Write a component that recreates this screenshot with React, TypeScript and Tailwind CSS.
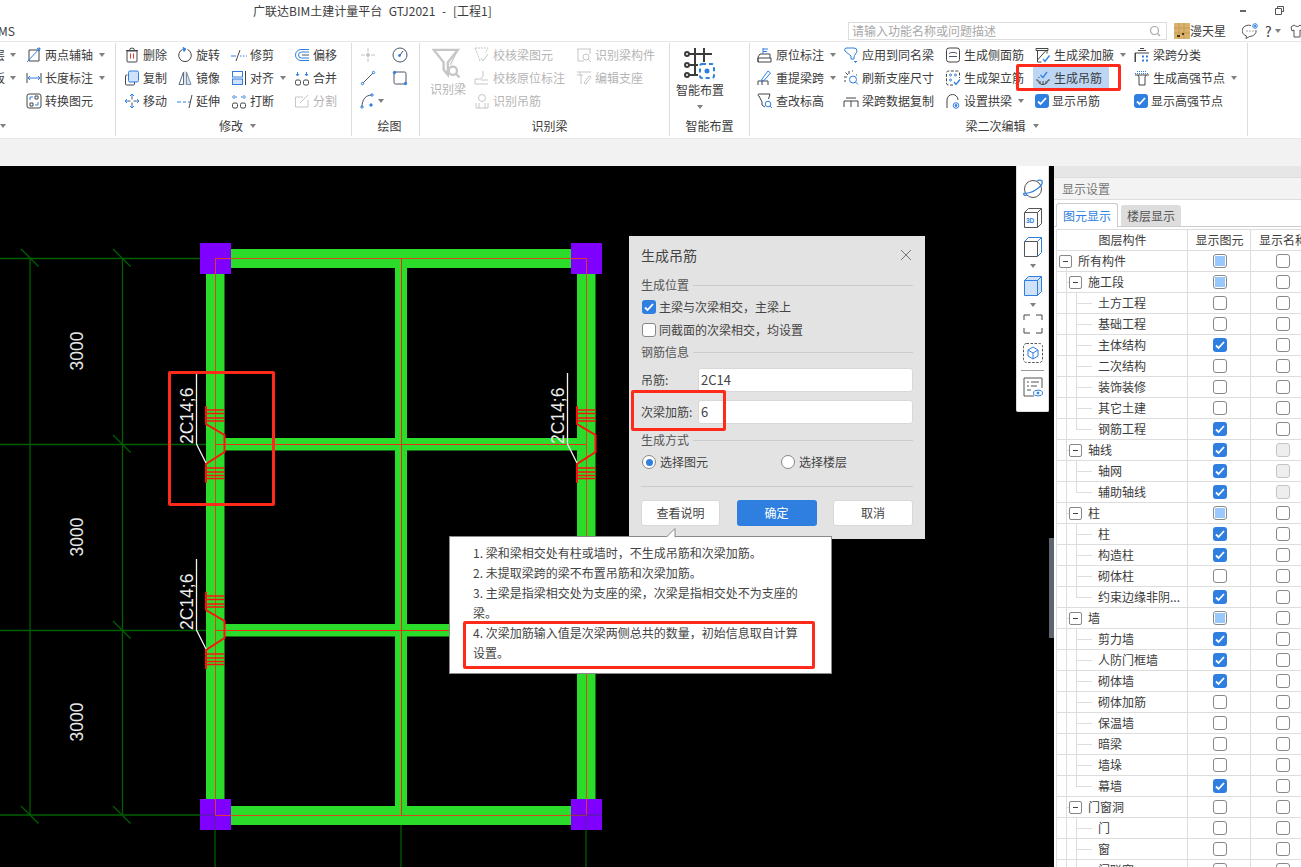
import type { ReactNode } from "react";

const B = "#2f7fe0";
const G = "#c6c6c6";
const S = "#4a5568";

const icons: Record<string, ReactNode> = {
  twoPoint: (<><path d="M3 14V3h10v11z" /><path d="M1 15L14 1" stroke={B} /><path d="M14 1l-3 .5M14 1l-.5 3" stroke={B} /></>),
  length: (<><path d="M1 3v10M15 3v10" /><path d="M2 8h12M2 8l2-2M2 8l2 2M14 8l-2-2M14 8l-2 2" stroke={B} /></>),
  convert: (<><rect x="1" y="1" width="14" height="14" rx="2" /><path d="M9 3h3v3H9zM4 10h3v3H4z" /><path d="M4 7V4h3M12 9v3H9" stroke={B} /></>),
  trash: (<><path d="M3 4h10v10a1 1 0 0 1-1 1H4a1 1 0 0 1-1-1zM2 3.500h12M5.500 3.500a2.500 2.500 0 0 1 5 0" /><path d="M6.500 6.500v5M9.500 6.500v5" stroke="#e03a30" /></>),
  rotate: (<><path d="M10.500 2.500a6.300 6.300 0 1 1-5 0" /><path d="M6 .5l3 1.500-2 2.500z" fill={B} stroke={B} /></>),
  trim: (<><path d="M0 9h5" stroke={B} /><path d="M9 9h1.500M12 9h1.500M15 9h1" stroke={B} /><path d="M5 14L9 3" /></>),
  offset: (<><path d="M15 2.500H7a5.500 5.500 0 0 0 0 11h8" stroke={B} /><path d="M15 5H7.500a3 3 0 0 0 0 6H15" stroke={B} /><path d="M15 8H8" stroke={S} /></>),
  copy: (<><path d="M3.500 5H2.500a1 1 0 0 0-1 1v8a1 1 0 0 0 1 1h7a1 1 0 0 0 1-1v-2" /><rect x="4.500" y="1" width="10" height="11" rx="1.500" fill="#cfe2fa" stroke={B} /></>),
  mirror: (<><path d="M6.500 2L2 14.500h4.500z" stroke="#5b6b80" /><path d="M9.500 2L14 14.500H9.500z" fill="#cfe2fa" stroke="#7a8ea6" /><path d="M8 1v14" stroke={G} /></>),
  align: (<><rect x="1.500" y="1.500" width="10" height="5.500" stroke={B} /><rect x="1.500" y="9" width="10" height="5.500" fill="#cfe2fa" stroke={B} /><path d="M14.500 1v14" /></>),
  merge: (<><rect x="1.500" y="10" width="5" height="5" rx="1.500" /><rect x="9.500" y="10" width="5" height="5" rx="1.500" /><path d="M3.500 2v3M2 4l1.500 2L5 4M12.500 2v3M11 4l1.500 2L14 4" stroke={B} /></>),
  move: (<><path d="M8 4v2.500M8 9.500V12M4 8h2.500M9.500 8H12" stroke={S} /><path d="M6 3l2-2 2 2M6 13l2 2 2-2M3 6L1 8l2 2M13 6l2 2-2 2M8 1v3M8 12v3M1 8h3M12 8h3" stroke={B} /></>),
  extend: (<><path d="M0 9h4M6 9h3" stroke={B} /><path d="M11 9h2" stroke={B} /><path d="M12 15l3-13" /></>),
  breakIt: (<><rect x="1.500" y="10" width="5" height="5" rx="1.500" /><rect x="9.500" y="10" width="5" height="5" rx="1.500" /><path d="M6 4H3M3.500 2L1.500 4l2 2M10 4h3M12.500 2l2 2-2 2" stroke={B} /></>),
  split: (<g stroke={G}><path d="M9 4H1.500v10H14V7" /><path d="M6 10l8-8" /></g>),
  point: (<g stroke={G}><path d="M8 1v4M8 11v4M1 8h4M11 8h4" /><circle cx="8" cy="8" r="1.500" fill={G} /></g>),
  circle: (<g stroke={S}><circle cx="8" cy="8" r="7" /><path d="M8 8l3-4" /><circle cx="7.500" cy="8.500" r="1" fill={B} stroke={B} /></g>),
  line: (<><path d="M3 13L13 3" stroke={S} /><circle cx="2.500" cy="13.500" r="1.200" stroke={B} /><circle cx="13.500" cy="2.500" r="1.200" stroke={B} /></>),
  rect: (<><rect x="2" y="2" width="12" height="12" rx="1.500" stroke={S} /><circle cx="13.500" cy="13.500" r="1.200" fill={B} stroke={B} /><circle cx="2.500" cy="2.500" r="1.200" fill={B} stroke={B} /></>),
  arc: (<><path d="M2 14C2 6 6 2 12 2" stroke={S} /><circle cx="2" cy="14" r="1.200" stroke={B} /><circle cx="12" cy="2" r="1.200" stroke={B} /><circle cx="11" cy="12" r="1.200" fill={B} stroke={B} /></>),
  checkBeam: (<g stroke={G}><path d="M1 1h13l-3 5M1 1l3 7 2 6" strokeDasharray="2 1" /><path d="M7 11l2 3 5-7" /></g>),
  checkSpot: (<g stroke={G}><path d="M1 14V9h6l2-3V1M1 14h13" /><path d="M7 10h7" /></g>),
  findRebar: (<g stroke={G}><circle cx="8" cy="5" r="3.500" /><path d="M2 10v5h12v-5M5 10v5M11 10v5" /></g>),
  findBeam: (<g stroke={G}><path d="M1 2h14M2 2v12h6M14 2v5" /><circle cx="10" cy="10" r="3" /><path d="M12 12l3 3" /></g>),
  editSeat: (<g stroke={G}><path d="M1 2h14M4 2v3M1 5h6M5 5v9" /><path d="M8 13l5-7 2 1-5 7z" /></g>),
  mark: (<><path d="M1 15v-5l2-3h10v4" /><path d="M1 11h13v4H1z" /><path d="M6 1v6M6 2h5M6 4.500h4" stroke={B} /></>),
  apply: (<><path d="M5 1h6a3 3 0 0 1 3 3c0 2-3 4-3 6v2H8V9L2 4a2 2 0 0 1 1-3z" stroke={B} /><path d="M11 14l1.500 1.500L14 14" stroke={B} fill={B} /></>),
  side: (<><rect x="1.500" y="1" width="13" height="14" rx="2.500" /><path d="M4 6.500c2-1.500 6-1.500 8 0v0M4 9.500h8" stroke={S} /></>),
  stand: (<><path d="M8 15H3.500a2 2 0 0 1-2-2V3a2 2 0 0 1 2-2h9a2 2 0 0 1 2 2v5" strokeDasharray="3 1.500" /><circle cx="5.500" cy="5" r="1" stroke={B} /><circle cx="10.500" cy="5" r="1" stroke={B} /><circle cx="5.500" cy="10" r="1" stroke={B} /><path d="M9 12l2 2.500 4-5" stroke={B} strokeWidth="1.300" /></>),
  haunch: (<><path d="M1 1.500h12v2H1zM2.500 3.500V15h4M12 3.500v3M2.500 13L11 3.500" /><path d="M8 12l2 2.500 4.500-6" stroke={B} strokeWidth="1.300" /></>),
  classify: (<><path d="M1 15V6h14M4 3.500h8M6 1.500h4" /><path d="M1.500 15V6" /><path d="M8 8.500h2v2H8zM12 8.500h2v2h-2zM8 12.500h2v2H8zM12 12.500h2v2h-2z" fill={B} stroke="none" /></>),
  repick: (<><path d="M1 15v-4h10v4M5 11v4" /><path d="M5 9l6-8 2.500 2-6 7-3 1z" stroke={B} /></>),
  refresh: (<><path d="M6 1v3M1 7h3M2.500 2.500L5 5M1 11h2" /><circle cx="10" cy="9.500" r="3.500" stroke={B} /><path d="M12.500 12l2.500 2.500" stroke={B} /><path d="M9 1h1M13 5h1" /></>),
  dup: (<><path d="M1 14V8h14v6M8 8v6M3 5h10" /></>),
  arch: (<><path d="M2 15V7a5.500 5.500 0 0 1 11 0" /><circle cx="11" cy="12.500" r="2.800" stroke={B} /><circle cx="11" cy="12.500" r="1" fill={B} stroke={B} /></>),
  lookup: (<><path d="M2 1h11l-1.500 5M2 1a1 1 0 0 0 0 2l3 6v3l3 2" /><circle cx="11" cy="11" r="2.800" stroke={B} /><path d="M13 13l2 2" stroke={B} /></>),
  hoist: (<><path d="M1 10h2a5 4.500 0 0 0 10 0h2" /><path d="M5 11v3M8 11v4M11 11v3" /><path d="M5.500 5l2.500 2.500L12 2" stroke={B} strokeWidth="1.300" /><path d="M4 7v1" /></>),
  node: (<><path d="M1 3.500h14M3 1.500h10" stroke={B} strokeDasharray="1 1" /><path d="M1 5h14M4 5l1 2v8h6V7l1-2" /></>),
};

const Ico = ({ name, size = 16 }: { name: string; size?: number }) => (
  <svg
    width={size}
    height={size}
    viewBox="0 0 16 16"
    fill="none"
    stroke="#454545"
    strokeWidth="1"
    className="shrink-0"
  >
    {icons[name]}
  </svg>
);

const Caret = ({ className = "ml-[6px]" }: { className?: string }) => (
  <span className={`${className} inline-block h-0 w-0 border-x-[3px] border-t-[4px] border-x-transparent border-t-[#808080]`} />
);

const Tool = ({
  icon,
  label,
  caret,
  off,
}: {
  icon?: string;
  label: string;
  caret?: boolean;
  off?: boolean;
}) => (
  <div className={`flex h-[23px] items-center whitespace-nowrap ${off ? "text-[#b5b5b5]" : "text-[#3c3c3c]"}`}>
    {icon && <Ico name={icon} />}
    <span className="ml-[3px]">{label}</span>
    {caret && <Caret />}
  </div>
);

const CheckTool = ({ label }: { label: string }) => (
  <div className="flex h-[23px] items-center whitespace-nowrap text-[#3c3c3c]">
    <Box state="on" />
    <span className="ml-[3px]">{label}</span>
  </div>
);

const Box = ({ state }: { state: string }) => {
  if (state === "on")
    return (
      <span className="flex h-[14px] w-[14px] shrink-0 items-center justify-center rounded-[3px] bg-[#2f7fe0]">
        <svg width="10" height="10" viewBox="0 0 10 10" fill="none" stroke="#fff" strokeWidth="1.800">
          <path d="M1 5.500l2.500 2.500L9 2" />
        </svg>
      </span>
    );
  if (state === "part")
    return (
      <span className="flex h-[14px] w-[14px] shrink-0 items-center justify-center rounded-[3px] border border-[#888] bg-white">
        <span className="h-[10px] w-[10px] bg-[#99c8ff]" />
      </span>
    );
  if (state === "dis")
    return <span className="h-[14px] w-[14px] shrink-0 rounded-[3px] border border-[#c4c4c4] bg-[#eeeeee]" />;
  return <span className="h-[14px] w-[14px] shrink-0 rounded-[3px] border border-[#888] bg-white" />;
};

const Group = ({
  className,
  label,
  caret,
  labelClass = "justify-center",
  children,
}: {
  className: string;
  label?: string;
  caret?: boolean;
  labelClass?: string;
  children: ReactNode;
}) => (
  <div className={`${className} flex h-[93px] shrink-0 flex-col border-r border-[#dddddd]`}>
    <div className="flex h-[72px] items-start">{children}</div>
    <div className={`${labelClass} flex h-[21px] items-center text-[#3c3c3c]`}>
      {label}
      {caret && <Caret className="ml-[7px]" />}
    </div>
  </div>
);

const Ribbon = () => (
  <div className="flex h-[98px] items-start overflow-hidden border-y border-[#e8e8e8] pt-[1px]">
    <Group className="w-[116px]" caret labelClass="justify-start -ml-[7px]">
      <div className="-ml-[7px] w-[33px] shrink-0">
        <div className="flex h-[23px] items-center">层<Caret className="ml-[5px]" /></div>
        <div className="flex h-[23px] items-center">板<Caret className="ml-[5px]" /></div>
      </div>
      <div>
        <Tool icon="twoPoint" label="两点辅轴" caret />
        <Tool icon="length" label="长度标注" caret />
        <Tool icon="convert" label="转换图元" />
      </div>
    </Group>
    <Group className="w-[236px] pl-[8px]" label="修改" caret>
      <div className="w-[53px] shrink-0">
        <Tool icon="trash" label="删除" />
        <Tool icon="copy" label="复制" />
        <Tool icon="move" label="移动" />
      </div>
      <div className="w-[54px] shrink-0">
        <Tool icon="rotate" label="旋转" />
        <Tool icon="mirror" label="镜像" />
        <Tool icon="extend" label="延伸" />
      </div>
      <div className="w-[63px] shrink-0">
        <Tool icon="trim" label="修剪" />
        <Tool icon="align" label="对齐" caret />
        <Tool icon="breakIt" label="打断" />
      </div>
      <div>
        <Tool icon="offset" label="偏移" />
        <Tool icon="merge" label="合并" />
        <Tool icon="split" label="分割" off />
      </div>
    </Group>
    <Group className="w-[68px] pl-[8px]" label="绘图">
      <div className="w-[32px] shrink-0">
        <Tool icon="point" label="" />
        <Tool icon="line" label="" />
        <div className="flex h-[23px] items-center"><Ico name="arc" /><Caret className="ml-[2px]" /></div>
      </div>
      <div>
        <Tool icon="circle" label="" />
        <Tool icon="rect" label="" />
      </div>
    </Group>
    <Group className="w-[250px] pl-[10px]" label="识别梁">
      <div className="flex w-[44px] shrink-0 flex-col pt-[5px] text-[#b5b5b5]">
        <svg className="ml-[2px]" width="30" height="32" viewBox="0 0 36 38" fill="none" stroke="#c6c6c6" strokeWidth="2.800">
          <path d="M2 2h29L19 17v15l-5-6V17z" />
          <path d="M31 2l-9 18" strokeWidth="1.500" />
          <circle cx="25" cy="27" r="5" fill="#fff" />
          <path d="M29 31l4 4" />
        </svg>
        <span className="whitespace-nowrap">识别梁</span>
      </div>
      <div className="w-[102px] shrink-0">
        <Tool icon="checkBeam" label="校核梁图元" off />
        <Tool icon="checkSpot" label="校核原位标注" off />
        <Tool icon="findRebar" label="识别吊筋" off />
      </div>
      <div>
        <Tool icon="findBeam" label="识别梁构件" off />
        <Tool icon="editSeat" label="编辑支座" off />
      </div>
    </Group>
    <Group className="w-[80px]" label="智能布置">
      <div className="flex w-full flex-col items-center pt-[4px] pr-[19px] text-[#3c3c3c]">
        <svg width="32" height="34" viewBox="0 0 32 34" fill="none" stroke="#3c3c3c" strokeWidth="2">
          <path d="M11 1v26M20 1v14M4 7h24M4 18h10M4 28h10" />
          <circle cx="3" cy="7" r="2" />
          <circle cx="3" cy="18" r="2" />
          <circle cx="3" cy="28" r="2" />
          <rect x="16" y="17" width="14" height="14" rx="2" stroke="#2f7fe0" strokeDasharray="4 3" />
          <circle cx="23" cy="24" r="1.500" fill="#2f7fe0" stroke="#2f7fe0" />
        </svg>
        <span className="whitespace-nowrap">智能布置</span>
        <Caret className="mt-[6px]" />
      </div>
    </Group>
    <Group className="w-[498px] pl-[7px]" label="梁二次编辑" caret>
      <div className="w-[86px] shrink-0">
        <Tool icon="mark" label="原位标注" caret />
        <Tool icon="repick" label="重提梁跨" caret />
        <Tool icon="lookup" label="查改标高" />
      </div>
      <div className="w-[102px] shrink-0">
        <Tool icon="apply" label="应用到同名梁" />
        <Tool icon="refresh" label="刷新支座尺寸" />
        <Tool icon="dup" label="梁跨数据复制" />
      </div>
      <div className="w-[90px] shrink-0">
        <Tool icon="side" label="生成侧面筋" />
        <Tool icon="stand" label="生成架立筋" />
        <Tool icon="arch" label="设置拱梁" caret />
      </div>
      <div className="w-[99px] shrink-0">
        <Tool icon="haunch" label="生成梁加腋" caret />
        <div className="-ml-[2px] w-[76px] rounded-[2px] bg-[#bcd6f3] pl-[2px]">
          <Tool icon="hoist" label="生成吊筋" />
        </div>
        <CheckTool label="显示吊筋" />
      </div>
      <div>
        <Tool icon="classify" label="梁跨分类" />
        <Tool icon="node" label="生成高强节点" caret />
        <CheckTool label="显示高强节点" />
      </div>
    </Group>
  </div>
);

const Rebar = ({ dx, dy }: { dx: number; dy: number }) => (
  <g transform={`translate(${dx} ${dy})`}>
    <path
      d="M206 406V424L224.500 435V452L206 464V483"
      fill="none"
      stroke="#ff1010"
      strokeWidth="2"
    />
    <path
      d="M206 410H224.500M206 413.500H224.500M206 418H224.500M206 421H224.500M206 468H224.500M206 472H224.500M206 475.500H224.500M206 478.500H224.500"
      fill="none"
      stroke="#ff1010"
      strokeWidth="1.500"
    />
    <path d="M196.500 373V444L206 463" fill="none" stroke="#f2f2f2" strokeWidth="1.300" />
    <text
      x="0"
      y="0"
      transform="translate(193 444) rotate(-90)"
      fontFamily="'Liberation Sans', sans-serif"
      fontSize="17.500"
      fill="#ededed"
    >
      2C14;6
    </text>
  </g>
);

const Tick = ({ x, y }: { x: number; y: number }) => (
  <path d={`M${x - 9} ${y - 9}L${x + 8.500} ${y + 8.500}`} stroke="#005f00" strokeWidth="1.300" />
);

const Dim = ({ y }: { y: number }) => (
  <text
    transform={`translate(83 ${y}) rotate(-90)`}
    textAnchor="middle"
    fontFamily="'Liberation Sans', sans-serif"
    fontSize="17.500"
    fill="#e8e8e8"
  >
    3000
  </text>
);

const Drawing = () => (
  <svg className="absolute inset-0" width="1054" height="701" viewBox="0 166 1054 701">
    <g stroke="#005f00" strokeWidth="1.300">
      <path d="M0 258.500H215M0 444.500H215M0 630.500H215M0 815H215" />
      <path d="M30 258V815M122.500 258V815" />
      <path d="M215 815V867M401 815V867M586 815V867" />
    </g>
    <Tick x={30} y={258} />
    <Tick x={122} y={258} />
    <Tick x={122} y={444} />
    <Tick x={122} y={630} />
    <Tick x={30} y={815} />
    <Tick x={122} y={815} />
    <Dim y={351} />
    <Dim y={537} />
    <Dim y={722} />
    <g fill="#2bdc2b">
      <rect x="206" y="258" width="18.500" height="557" />
      <rect x="577" y="258" width="18.500" height="557" />
      <rect x="395" y="258" width="12" height="557" />
      <rect x="215" y="249" width="371" height="19" />
      <rect x="215" y="806" width="371" height="19" />
      <rect x="215" y="438" width="371" height="12.500" />
      <rect x="215" y="624" width="371" height="12.500" />
    </g>
    <g stroke="#d8481e" strokeWidth="1">
      <path d="M215.500 258.500V815M586.500 258.500V815M215 258.500H586M215 815.500H586" />
      <path d="M401.500 258V815M215 444.500H586M215 630.500H586" stroke="#f02a1c" />
    </g>
    <g fill="#8000ff">
      <rect x="200" y="243" width="31" height="31" />
      <rect x="571" y="243" width="31" height="31" />
      <rect x="200" y="799" width="31" height="31" />
      <rect x="571" y="799" width="31" height="31" />
    </g>
    <path d="M215.500 258.500V274M215 258.500H231M571 258.500H586.500V274M215.500 799V815.500H231M571 815.500H586.500V799" fill="none" stroke="#e03a30" />
    <path d="M200 815H215M215 816V830M571 815H602M586 816V830" fill="none" stroke="#4a2a8a" />
    <Rebar dx={0} dy={0} />
    <Rebar dx={371} dy={0} />
    <Rebar dx={0} dy={186} />
  </svg>
);

const SideTools = () => (
  <div className="absolute top-0 left-[1016px] flex h-[246px] w-[33px] flex-col items-center rounded-b-[2px] border border-t-0 border-[#dddddd] bg-white">
    <svg className="mt-[13px]" width="22" height="20" viewBox="0 0 22 20" fill="none" stroke="#555">
      <ellipse cx="11" cy="10" rx="8.500" ry="8.500" />
      <path d="M2 14c3 1 9-1 13-4s6-6 5-8c-1-1-3-1-5 0M2 14c-1 2 1 3 3 2" stroke={B} strokeWidth="1.300" />
    </svg>
    <svg className="mt-[8px]" width="20" height="21" viewBox="0 0 20 21" fill="none" stroke="#555">
      <path d="M1.500 5.500h13v15h-13zM1.500 5.500l4-4h13v15l-4 4M14.500 5.500l4-4" />
      <text x="3" y="16" fontSize="6.500" fontWeight="700" fill={B} stroke="none" fontFamily="'Liberation Sans', sans-serif">3D</text>
    </svg>
    <svg className="mt-[8px]" width="20" height="21" viewBox="0 0 20 21" fill="none" stroke="#555">
      <path d="M1.500 5.500h13v15h-13z" />
      <path d="M1.500 5.500l4-4h13v15l-4 4M14.500 5.500l4-4" stroke={B} />
    </svg>
    <Caret className="mt-[7px]" />
    <svg className="mt-[7px]" width="20" height="21" viewBox="0 0 20 21" fill="#cfe2fa" stroke={B}>
      <path d="M1.500 5.500h13v15h-13z" />
      <path d="M1.500 5.500l4-4h13v15l-4 4V5.500zM14.500 5.500l4-4" />
    </svg>
    <Caret className="mt-[7px]" />
    <svg className="mt-[7px]" width="20" height="20" viewBox="0 0 20 20" fill="none" stroke="#444">
      <path d="M1 6V1h6M13 1h6v5M19 14v5h-6M7 19H1v-5" />
    </svg>
    <svg className="mt-[9px]" width="20" height="20" viewBox="0 0 20 20" fill="none" stroke="#555">
      <rect x="0.500" y="0.500" width="19" height="19" rx="3" strokeDasharray="2.500 1.500" />
      <path d="M10 4l5 3v6l-5 3-5-3V7zM5 7l5 3 5-3M10 10v6" stroke={B} />
    </svg>
    <span className="mt-[7px] h-px w-[23px] bg-[#999]" />
    <svg className="mt-[6px]" width="20" height="20" viewBox="0 0 20 20" fill="none" stroke="#555">
      <path d="M11 19H1V1h18v10" />
      <path d="M4 5h2M8 5h8M4 9h2M8 9h6M4 13h4" />
      <ellipse cx="15" cy="16" rx="4.500" ry="2.800" stroke={B} />
      <circle cx="15" cy="16" r="1" fill={B} stroke={B} />
    </svg>
  </div>
);

const SectionTitle = ({ label }: { label: string }) => (
  <div className="flex h-[22px] items-center text-[#555]">
    <span className="whitespace-nowrap">{label}</span>
    <span className="ml-[4px] h-px flex-1 bg-[#cccccc]" />
  </div>
);

const Radio = ({ on }: { on?: boolean }) => (
  <span className="flex h-[14px] w-[14px] shrink-0 items-center justify-center rounded-full border border-[#888] bg-white">
    {on && <span className="h-[7px] w-[7px] rounded-full bg-[#2f7fe0]" />}
  </span>
);

const Field = ({ label, value, className = "" }: { label: string; value: string; className?: string }) => (
  <div className={`${className} flex h-[24px] items-center`}>
    <span className="w-[57px] shrink-0 whitespace-nowrap text-[#444]">{label}</span>
    <div className="flex h-full flex-1 items-center rounded-[3px] border border-[#d8d8d8] bg-white pl-[2px] text-[13px] text-[#444]">
      {value}
    </div>
  </div>
);

const BeamDialog = () => (
  <div className="absolute top-[70px] left-[629px] h-[303px] w-[296px] bg-[#e3e3e3] px-[12px] text-[#444]">
    <div className="flex h-[38px] items-center justify-between text-[14px]">
      <span>生成吊筋</span>
      <svg width="12" height="12" viewBox="0 0 12 12" stroke="#777" className="mr-[1px]">
        <path d="M1 1l10 10M11 1L1 11" />
      </svg>
    </div>
    <SectionTitle label="生成位置" />
    <div className="flex h-[22px] items-center gap-[3px] pl-[1px]">
      <Box state="on" />
      主梁与次梁相交，主梁上
    </div>
    <div className="mt-[1px] flex h-[22px] items-center gap-[3px] pl-[1px]">
      <Box state="off" />
      同截面的次梁相交，均设置
    </div>
    <SectionTitle label="钢筋信息" />
    <Field className="mt-[5px]" label="吊筋:" value="2C14" />
    <Field className="mt-[8px]" label="次梁加筋:" value="6" />
    <div className="mt-[5px]">
      <SectionTitle label="生成方式" />
    </div>
    <div className="flex h-[22px] items-center pl-[1px]">
      <div className="flex w-[139px] items-center gap-[4px]">
        <Radio on />
        选择图元
      </div>
      <div className="flex items-center gap-[4px]">
        <Radio />
        选择楼层
      </div>
    </div>
    <div className="mt-[13px] h-px bg-[#cccccc]" />
    <div className="mt-[13px] flex justify-between">
      <button className="h-[26px] w-[79px] rounded-[3px] border border-[#d8d8d8] bg-white text-[#444]">查看说明</button>
      <button className="h-[26px] w-[80px] rounded-[3px] bg-[#2f7fe0] text-white">确定</button>
      <button className="h-[26px] w-[80px] rounded-[3px] border border-[#d8d8d8] bg-white text-[#444]">取消</button>
    </div>
  </div>
);

const notes = [
  "1. 梁和梁相交处有柱或墙时，不生成吊筋和次梁加筋。",
  "2. 未提取梁跨的梁不布置吊筋和次梁加筋。",
  "3. 主梁是指梁相交处为支座的梁，次梁是指相交处不为支座的梁。",
  "4. 次梁加筋输入值是次梁两侧总共的数量，初始信息取自计算设置。",
];

const NotePopup = () => (
  <div className="absolute top-[370px] left-[449px] h-[138px] w-[383px] border border-[#8a8a8a] bg-white pt-[6px] pr-[30px] pl-[23px] leading-[20px] text-[#444]">
    <svg className="absolute -top-[9px] left-[216px]" width="10" height="10" viewBox="0 0 10 10">
      <path d="M0 9.500L9 0.500V9.500" fill="#fff" stroke="#8a8a8a" />
      <path d="M0 10H9" stroke="#fff" strokeWidth="2" />
    </svg>
    {notes.map((n) => (
      <p key={n}>{n}</p>
    ))}
  </div>
);

type Row = { name: string; level: number; show: string; label?: string; last?: boolean };

const rows: Row[] = [
  { name: "所有构件", level: 0, show: "part" },
  { name: "施工段", level: 1, show: "part" },
  { name: "土方工程", level: 2, show: "off" },
  { name: "基础工程", level: 2, show: "off" },
  { name: "主体结构", level: 2, show: "on" },
  { name: "二次结构", level: 2, show: "off" },
  { name: "装饰装修", level: 2, show: "off" },
  { name: "其它土建", level: 2, show: "off" },
  { name: "钢筋工程", level: 2, show: "on", last: true },
  { name: "轴线", level: 1, show: "on", label: "dis" },
  { name: "轴网", level: 2, show: "on", label: "dis" },
  { name: "辅助轴线", level: 2, show: "on", label: "dis", last: true },
  { name: "柱", level: 1, show: "part" },
  { name: "柱", level: 2, show: "on" },
  { name: "构造柱", level: 2, show: "on" },
  { name: "砌体柱", level: 2, show: "off" },
  { name: "约束边缘非阴...", level: 2, show: "on", last: true },
  { name: "墙", level: 1, show: "part" },
  { name: "剪力墙", level: 2, show: "on" },
  { name: "人防门框墙", level: 2, show: "on" },
  { name: "砌体墙", level: 2, show: "on" },
  { name: "砌体加筋", level: 2, show: "off" },
  { name: "保温墙", level: 2, show: "off" },
  { name: "暗梁", level: 2, show: "off" },
  { name: "墙垛", level: 2, show: "off" },
  { name: "幕墙", level: 2, show: "on", last: true },
  { name: "门窗洞", level: 1, show: "off" },
  { name: "门", level: 2, show: "off" },
  { name: "窗", level: 2, show: "off" },
  { name: "门联窗", level: 2, show: "off" },
];

const Minus = () => (
  <span className="flex h-[13px] w-[13px] shrink-0 items-center justify-center rounded-[2px] border border-[#888] bg-white">
    <span className="h-px w-[5px] bg-[#444]" />
  </span>
);

const LayerRow = ({ row, index }: { row: Row; index: number }) => (
  <div className="grid h-[21px] grid-cols-[131px_63px_1fr] border-b border-[#dddddd]">
    <div className="relative flex items-center border-r border-[#dddddd] text-[#3c3c3c]">
      <span className={`absolute left-[9px] w-px bg-[#dddddd] ${index === 0 ? "top-[10px] bottom-0" : "top-0 bottom-0"}`} />
      {row.level === 1 && <span className="absolute top-[10px] left-[9px] h-px w-[4px] bg-[#dddddd]" />}
      {row.level === 2 && (
        <>
          <span className={`absolute top-0 left-[19px] w-px bg-[#dddddd] ${row.last ? "h-[11px]" : "h-[21px]"}`} />
          <span className="absolute top-[10px] left-[19px] h-px w-[16px] bg-[#dddddd]" />
        </>
      )}
      {row.level === 0 && (
        <div className="relative flex items-center gap-[6px] pl-[2px]">
          <Minus />
          {row.name}
        </div>
      )}
      {row.level === 1 && (
        <div className="relative flex items-center gap-[6px] pl-[12px]">
          <Minus />
          {row.name}
        </div>
      )}
      {row.level === 2 && <span className="relative pl-[41px] whitespace-nowrap">{row.name}</span>}
    </div>
    <div className="flex items-center justify-center border-r border-[#dddddd] pl-[1px]">
      <Box state={row.show} />
    </div>
    <div className="flex items-center pl-[25px]">
      <Box state={row.label ?? "off"} />
    </div>
  </div>
);

const DisplayPanel = () => (
  <div className="w-[247px] shrink-0 overflow-hidden bg-white">
    <div className="h-[11px] bg-[#e6e6e6]" />
    <div className="flex h-[23px] items-center border-y border-[#dddddd] bg-[#f3f3f3] pl-[8px] text-[#777]">显示设置</div>
    <div className="flex h-[27px] items-end gap-[3px] border-b border-[#cccccc] pl-[2px]">
      <div className="-mb-px flex h-[24px] w-[62px] items-center justify-center rounded-t-[3px] border border-b-0 border-[#cccccc] bg-white text-[#2f7fe0]">
        图元显示
      </div>
      <div className="flex h-[21px] w-[60px] items-center justify-center rounded-t-[3px] bg-[#dddddd] text-[#555]">楼层显示</div>
    </div>
    <div className="mt-[2px] ml-[2px] border-t border-l border-[#dddddd]">
      <div className="grid h-[21px] grid-cols-[131px_63px_1fr] border-b border-[#dddddd] text-[#3c3c3c]">
        <div className="flex items-center justify-center border-r border-[#dddddd] pl-[1px]">图层构件</div>
        <div className="flex items-center justify-center border-r border-[#dddddd] pl-[1px]">显示图元</div>
        <div className="flex items-center overflow-hidden pl-[8px] whitespace-nowrap">显示名称</div>
      </div>
      {rows.map((r, i) => (
        <LayerRow key={`${r.name}-${i}`} row={r} index={i} />
      ))}
    </div>
  </div>
);

const App = () => {
  return (
    <div className="relative h-[867px] w-[1301px] overflow-hidden bg-white font-['Noto_Sans_CJK_SC','Liberation_Sans',sans-serif] text-[12px] text-[#3c3c3c]">
      <div className="flex h-[21px] items-center pl-[253px] whitespace-nowrap">
        <span className="w-[987px] shrink-0 [word-spacing:4px]">广联达BIM土建计量平台 GTJ2021 - [工程1]</span>
        <span className="h-[2px] w-[6px] bg-[#666]" />
        <svg className="ml-[29px]" width="9" height="9" viewBox="0 0 9 9" fill="none" stroke="#555">
          <path d="M2.500 2.500V0.500h6v5h-2M0.500 2.500h6v6h-6z" />
        </svg>
      </div>
      <div className="flex h-[20px] items-center">
        <span className="-ml-[2px] w-[850px] shrink-0">MS</span>
        <div className="flex h-[18px] w-[319px] shrink-0 items-center justify-between border border-[#dddddd] pr-[5px] pl-[3px] text-[#a8a8a8]">
          请输入功能名称或问题描述
          <svg width="12" height="12" viewBox="0 0 12 12" fill="none" stroke="#aaa" strokeWidth="1.200">
            <circle cx="5.500" cy="5.500" r="4" />
            <path d="M8.500 8.500l2.500 2.500" />
          </svg>
        </div>
        <svg className="ml-[7px] shrink-0" width="16" height="16" viewBox="0 0 16 16">
          <rect width="16" height="16" fill="#d9b26f" />
          <path d="M5 0v16M10 0v16M0 5h16M0 10h16" stroke="#c79c55" />
          <path d="M3 12h3v2H3zM8 10h2v2H8z" fill="#4a3410" />
        </svg>
        <span className="whitespace-nowrap">漫天星</span>
        <svg className="ml-[16px] shrink-0" width="16" height="16" viewBox="0 0 16 16" fill="none" stroke="#555">
          <path d="M9 2.500A6.500 5.500 0 1 0 4.500 13L4 15.500 7.500 13.500A6.500 5.500 0 0 0 14 7" />
          <path d="M4.500 8h1M7.500 8h1M10.500 8h1" />
          <circle cx="13" cy="3" r="2.300" stroke={B} fill="#fff" />
          <circle cx="13" cy="3" r="0.800" fill={B} stroke={B} />
        </svg>
        <span className="ml-[7px] text-[14px]">?</span>
        <Caret className="ml-[3px]" />
        <svg className="ml-[9px] shrink-0" width="14" height="14" viewBox="0 0 14 14" fill="none" stroke="#555">
          <path d="M4 1L1 3l1 4 2-1v7h6V6l2 1 1-4-3-2c-1 2-4 2-6 0z" />
        </svg>
      </div>
      <Ribbon />
      <div className="h-[27px] bg-[#f2f2f2]" />
      <div className="flex h-[701px]">
        <div className="relative flex-1 bg-black">
          <Drawing />
          <SideTools />
          <span className="absolute top-[372px] left-[1049px] h-[100px] w-[5px] bg-[#5d6670]" />
          <BeamDialog />
          <NotePopup />
        </div>
        <DisplayPanel />
      </div>
      <span className="absolute top-[64px] left-[1016px] h-[27px] w-[105px] rounded-[2px] border-[3px] border-[#ff2a1a]" />
      <span className="absolute top-[390px] left-[631px] h-[41px] w-[95px] rounded-[2px] border-[3px] border-[#ff2a1a]" />
      <span className="absolute top-[371px] left-[168px] h-[135px] w-[107px] rounded-[2px] border-[3px] border-[#ff2a1a]" />
      <span className="absolute top-[621px] left-[463px] h-[48px] w-[352px] rounded-[2px] border-[3px] border-[#ff2a1a]" />
    </div>
  );
};

export default App;
